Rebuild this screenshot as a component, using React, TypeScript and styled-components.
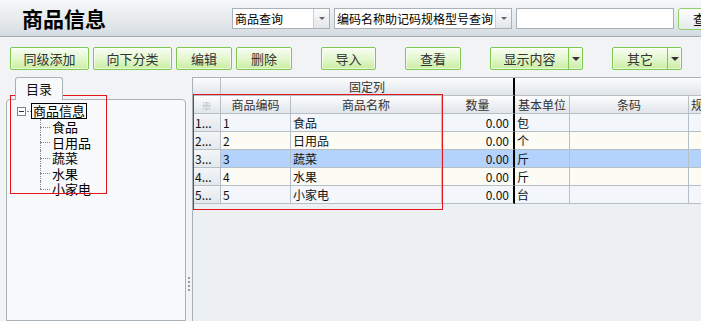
import React from "react";
import styled, { createGlobalStyle, css } from "styled-components";

const GlobalStyle = createGlobalStyle`
  html, body {
    margin: 0;
    padding: 0;
    background: #f1f3f5;
  }
  body {
    font-family: "Noto Sans CJK SC", "Liberation Sans", sans-serif;
    font-size: 12px;
    color: #222;
  }
  * {
    box-sizing: border-box;
  }
`;

type Row = { code: string; name: string; qty: string; unit: string };

const rows: Row[] = [
  { code: "1", name: "食品", qty: "0.00", unit: "包" },
  { code: "2", name: "日用品", qty: "0.00", unit: "个" },
  { code: "3", name: "蔬菜", qty: "0.00", unit: "斤" },
  { code: "4", name: "水果", qty: "0.00", unit: "斤" },
  { code: "5", name: "小家电", qty: "0.00", unit: "台" },
];
const selectedRow = 2;

const cols = { head: 28, code: 70, name: 151, qty: 73, unit: 55, barcode: 119, spec: 80 };

const App: React.FC = () => {
  return (
    <>
      <GlobalStyle />
      <Page>
        <Header>
          <Title>商品信息</Title>
          <SearchBar>
            <Select $w={98}>
              <SelectText>商品查询</SelectText>
              <SelectArrow>
                <Caret $small />
              </SelectArrow>
            </Select>
            <Select $w={178}>
              <SelectText>编码名称助记码规格型号查询</SelectText>
              <SelectArrow>
                <Caret $small />
              </SelectArrow>
            </Select>
            <SearchInput />
            <SearchButton>查询</SearchButton>
          </SearchBar>
        </Header>

        <Toolbar>
          <ToolButton $w={79}>同级添加</ToolButton>
          <ToolButton $w={79}>向下分类</ToolButton>
          <ToolButton $w={56}>编辑</ToolButton>
          <ToolButton $w={56}>删除</ToolButton>
          <ToolButton $w={55} $spaced>导入</ToolButton>
          <ToolButton $w={56} $spaced>查看</ToolButton>
          <ToolButton $w={93} $spaced>
            <ButtonLabel>显示内容</ButtonLabel>
            <ButtonArrow>
              <Caret />
            </ButtonArrow>
          </ToolButton>
          <ToolButton $w={70} $spaced>
            <ButtonLabel>其它</ButtonLabel>
            <ButtonArrow>
              <Caret />
            </ButtonArrow>
          </ToolButton>
        </Toolbar>

        <Body>
          <LeftColumn>
            <Tab>目录</Tab>
            <TreePanel>
              <TreeRoot>
                <ExpandBox />
                <Connector />
                <RootLabel>商品信息</RootLabel>
              </TreeRoot>
              <ChildList>
                {rows.map((r) => (
                  <TreeChild key={r.code}>{r.name}</TreeChild>
                ))}
              </ChildList>
            </TreePanel>
          </LeftColumn>

          <Splitter>
            {[0, 1, 2, 3].map((i) => (
              <SplitDot key={i} />
            ))}
          </Splitter>

          <GridArea>
            <GridRow>
              <Cell $w={cols.head} $kind="head" />
              <Cell $w={cols.code + cols.name + cols.qty} $kind="head" $align="center" $thick>
                固定列
              </Cell>
              <Cell $w={cols.unit + cols.barcode + cols.spec} $kind="head" />
            </GridRow>
            <GridRow>
              <Cell $w={cols.head} $kind="head" $align="center">
                <Star>※</Star>
              </Cell>
              <Cell $w={cols.code} $kind="head" $align="center">
                商品编码
              </Cell>
              <Cell $w={cols.name} $kind="head" $align="center">
                商品名称
              </Cell>
              <Cell $w={cols.qty} $kind="head" $align="center" $thick>
                数量
              </Cell>
              <Cell $w={cols.unit} $kind="head" $align="center">
                基本单位
              </Cell>
              <Cell $w={cols.barcode} $kind="head" $align="center">
                条码
              </Cell>
              <Cell $w={cols.spec} $kind="head">
                规格
              </Cell>
            </GridRow>
            {rows.map((r, i) => {
              const kind = i === selectedRow ? "sel" : i % 2 === 0 ? "odd" : "even";
              return (
                <GridRow key={r.code}>
                  <Cell $w={cols.head} $kind="rowhead">
                    {i + 1}...
                  </Cell>
                  <Cell $w={cols.code} $kind={kind}>
                    {r.code}
                  </Cell>
                  <Cell $w={cols.name} $kind={kind}>
                    {r.name}
                  </Cell>
                  <Cell $w={cols.qty} $kind={kind} $align="right" $thick>
                    {r.qty}
                  </Cell>
                  <Cell $w={cols.unit} $kind={kind}>
                    {r.unit}
                  </Cell>
                  <Cell $w={cols.barcode} $kind={kind} />
                  <Cell $w={cols.spec} $kind={kind} />
                </GridRow>
              );
            })}
          </GridArea>
        </Body>

        <Annotation $x={10} $y={95} $w={97} $h={99} />
        <Annotation $x={193} $y={94} $w={250} $h={116} />
      </Page>
    </>
  );
};

const Page = styled.div`
  position: relative;
  width: 701px;
  height: 321px;
  overflow: hidden;
  display: flex;
  flex-direction: column;
  background: #f1f3f5;
`;

const Header = styled.div`
  height: 37px;
  flex-shrink: 0;
  display: flex;
  align-items: center;
  padding: 1px 0 0 22px;
  border-bottom: 1px solid #a4acb3;
  background: linear-gradient(#f6f8f9, #e6eaed 55%, #d4dbe0);
`;

const Title = styled.div`
  width: 210px;
  flex-shrink: 0;
  font-size: 21px;
  font-weight: bold;
  line-height: 22px;
  color: #000;
  margin-top: -2px;
`;

const SearchBar = styled.div`
  display: flex;
  gap: 4px;
`;

const Select = styled.div<{ $w: number }>`
  width: ${({ $w }) => $w}px;
  height: 21px;
  display: flex;
  border: 1px solid #a9b1b8;
  background: #fff;
`;

const SelectText = styled.div`
  flex: 1;
  padding-left: 2px;
  line-height: 19px;
  font-size: 12px;
  color: #000;
  white-space: nowrap;
  overflow: hidden;
`;

const SelectArrow = styled.div`
  width: 16px;
  display: flex;
  align-items: center;
  justify-content: center;
  border-left: 1px solid #c8cfd5;
  background: linear-gradient(#fbfcfc, #e3e7ea);
`;

const Caret = styled.span<{ $small?: boolean }>`
  width: 0;
  height: 0;
  border-left: 4px solid transparent;
  border-right: 4px solid transparent;
  border-top: 4px solid #333;
  ${({ $small }) =>
    $small &&
    css`
      border-left-width: 3px;
      border-right-width: 3px;
      border-top: 3px solid #666;
    `}
`;

const SearchInput = styled.div`
  width: 158px;
  height: 21px;
  border: 1px solid #a9b1b8;
  background: #fff;
`;

const SearchButton = styled.div`
  width: 44px;
  height: 22px;
  flex-shrink: 0;
  border: 1px solid #8fd26a;
  border-radius: 3px;
  background: linear-gradient(#fdfdfd, #e6eaed);
  font-size: 13px;
  line-height: 20px;
  padding-left: 14px;
  color: #000;
  white-space: nowrap;
  overflow: hidden;
`;

const Toolbar = styled.div`
  height: 40px;
  flex-shrink: 0;
  display: flex;
  align-items: flex-start;
  gap: 4px;
  padding: 10px 0 0 10px;
`;

const ToolButton = styled.div<{ $w: number; $spaced?: boolean }>`
  width: ${({ $w }) => $w}px;
  height: 23px;
  flex-shrink: 0;
  display: flex;
  align-items: center;
  justify-content: center;
  border: 1px solid #7ec852;
  border-radius: 2px;
  background: linear-gradient(#f8fdf3, #e2f6cc 55%, #c8ee9f);
  box-shadow: inset 0 0 0 1px rgba(255, 255, 255, 0.6);
  font-size: 13px;
  color: #333;
  margin-left: ${({ $spaced }) => ($spaced ? 25 : 0)}px;
`;

const ButtonLabel = styled.span`
  flex: 1;
  text-align: center;
`;

const ButtonArrow = styled.span`
  width: 14px;
  align-self: stretch;
  display: flex;
  align-items: center;
  justify-content: center;
  border-left: 1px solid #7ec852;
`;

const Body = styled.div`
  flex: 1;
  display: flex;
  min-height: 0;
`;

const LeftColumn = styled.div`
  width: 186px;
  flex-shrink: 0;
  display: flex;
  flex-direction: column;
  padding-left: 6px;
`;

const Tab = styled.div`
  position: relative;
  z-index: 1;
  width: 48px;
  height: 23px;
  margin: 0 0 -1px 9px;
  border: 1px solid #a9b1b8;
  border-bottom: none;
  border-radius: 3px 3px 0 0;
  background: #f8f9fb;
  font-size: 13px;
  line-height: 21px;
  text-align: center;
  color: #111;
`;

const TreePanel = styled.div`
  flex: 1;
  border: 1px solid #a9b1b8;
  border-radius: 4px 4px 0 0;
  background: #f7f9fa;
  padding: 3px 0 0 10px;
  font-size: 13px;
  color: #000;
`;

const TreeRoot = styled.div`
  display: flex;
  align-items: center;
  height: 16px;
`;

const ExpandBox = styled.span`
  position: relative;
  width: 9px;
  height: 9px;
  border: 1px solid #7b8794;
  background: #fff;
  &::after {
    content: "";
    position: absolute;
    left: 1px;
    right: 1px;
    top: 3px;
    height: 1px;
    background: #333;
  }
`;

const Connector = styled.span`
  width: 4px;
  margin-left: 1px;
  border-top: 1px dotted #888;
`;

const RootLabel = styled.span`
  border: 1px solid #000;
  padding: 0 1px;
  line-height: 14px;
  white-space: nowrap;
`;

const ChildList = styled.div`
  margin-left: 23px;
`;

const TreeChild = styled.div`
  position: relative;
  height: 15.5px;
  line-height: 15.5px;
  padding-left: 12px;
  white-space: nowrap;
  &::before {
    content: "";
    position: absolute;
    left: 0;
    top: 50%;
    width: 10px;
    border-top: 1px dotted #888;
  }
  &::after {
    content: "";
    position: absolute;
    left: 0;
    top: 0;
    height: 100%;
    border-left: 1px dotted #888;
  }
  &:last-child::after {
    height: 50%;
  }
`;

const Splitter = styled.div`
  width: 6px;
  flex-shrink: 0;
  display: flex;
  flex-direction: column;
  align-items: center;
  gap: 2px;
  padding-top: 200px;
`;

const SplitDot = styled.span`
  width: 2px;
  height: 2px;
  background: #97a0a8;
`;

const GridArea = styled.div`
  flex: 1;
  min-width: 0;
  overflow: hidden;
  border-left: 1px solid #a9b1b8;
  border-top: 1px solid #a9b1b8;
  background: #ecf0f3;
`;

const GridRow = styled.div`
  display: flex;
  height: 18px;
`;

type CellKind = "head" | "rowhead" | "odd" | "even" | "sel";

const cellBg: Record<CellKind, string> = {
  head: "linear-gradient(#fdfdfe, #eef1f4 50%, #e0e5ea)",
  rowhead: "linear-gradient(#f3f5f7, #e4e8ec)",
  odd: "#f3f6fa",
  even: "#fcfcf5",
  sel: "#b3d3fc",
};

const Cell = styled.div<{
  $w: number;
  $kind: CellKind;
  $align?: "left" | "center" | "right";
  $thick?: boolean;
}>`
  width: ${({ $w }) => $w}px;
  flex-shrink: 0;
  height: 18px;
  padding: 0 ${({ $align }) => ($align === "right" ? 4 : 2)}px 0 2px;
  border-right: 1px solid #b7bfc6;
  border-bottom: 1px solid #b7bfc6;
  background: ${({ $kind }) => cellBg[$kind]};
  font-size: 12px;
  line-height: 17px;
  text-align: ${({ $align }) => $align || "left"};
  color: ${({ $kind }) => ($kind === "head" ? "#333" : "#111")};
  white-space: nowrap;
  overflow: hidden;
  ${({ $thick }) =>
    $thick &&
    css`
      border-right: 2px solid #000;
    `}
`;

const Star = styled.span`
  color: #9aa2aa;
  font-size: 10px;
`;

const Annotation = styled.div<{ $x: number; $y: number; $w: number; $h: number }>`
  position: absolute;
  left: ${({ $x }) => $x}px;
  top: ${({ $y }) => $y}px;
  width: ${({ $w }) => $w}px;
  height: ${({ $h }) => $h}px;
  border: 1px solid #e8141b;
  pointer-events: none;
`;

export default App;
